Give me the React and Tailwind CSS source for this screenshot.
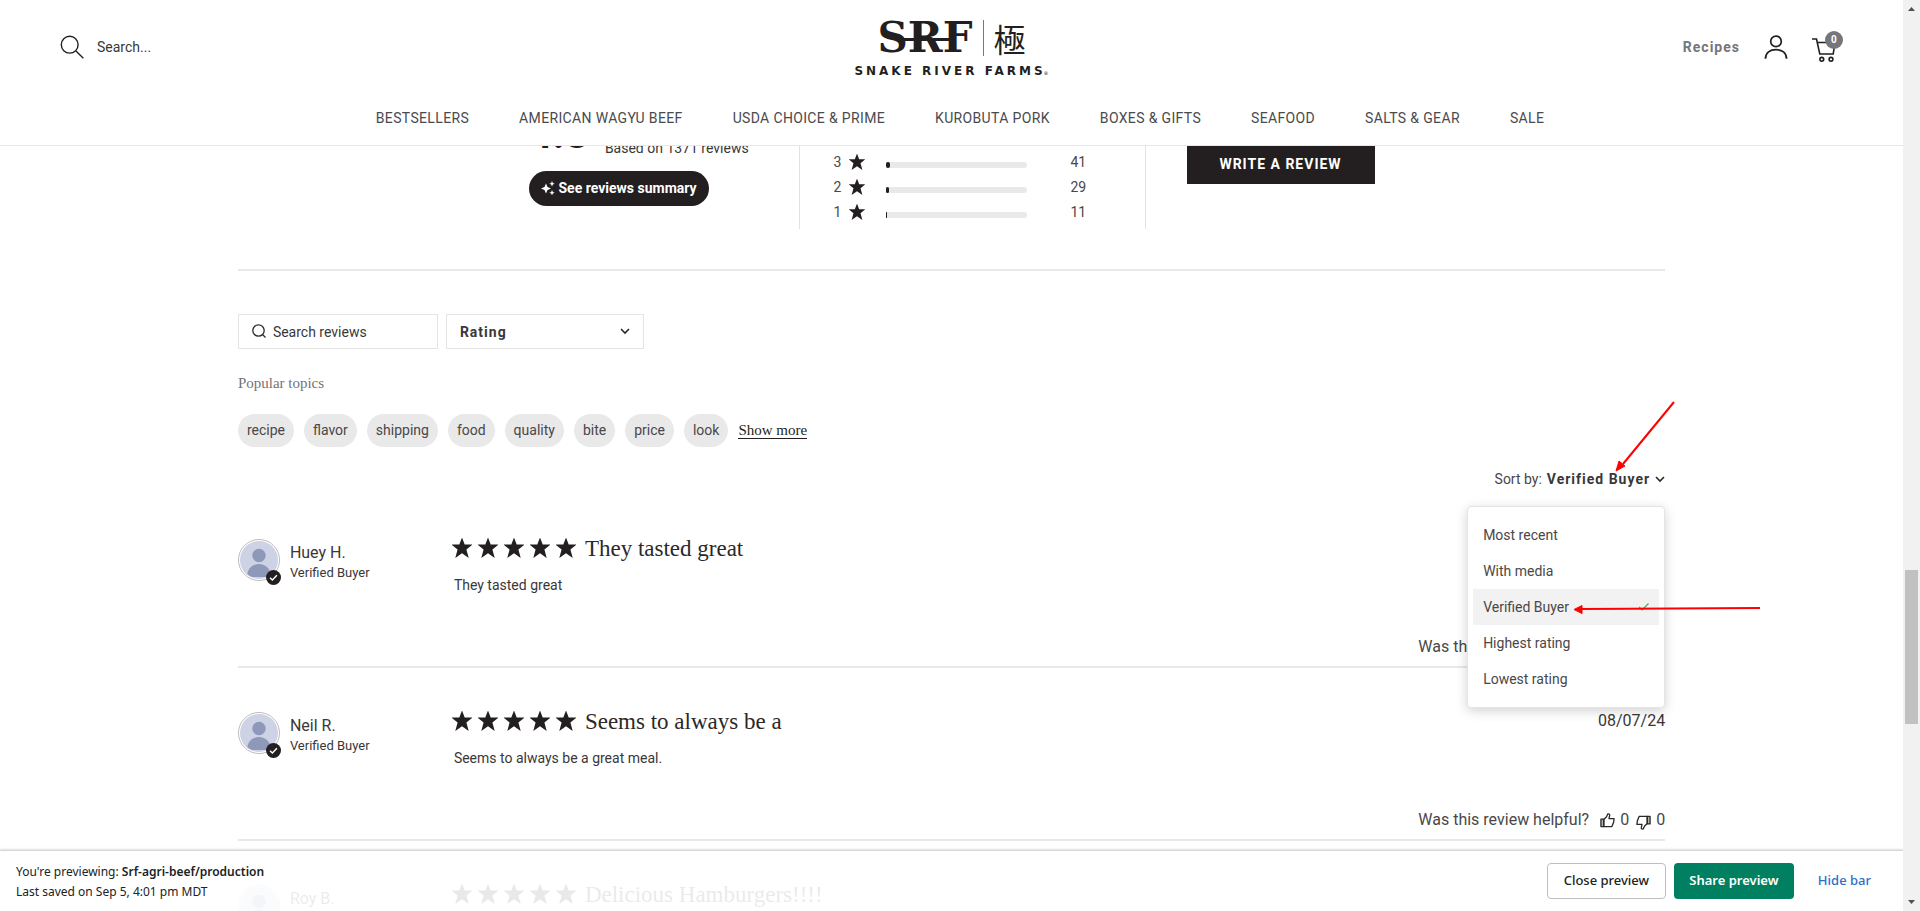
import React from "react";

const NAV = ["BESTSELLERS", "AMERICAN WAGYU BEEF", "USDA CHOICE & PRIME", "KUROBUTA PORK", "BOXES & GIFTS", "SEAFOOD", "SALTS & GEAR", "SALE"];
const BREAKDOWN = [
  { stars: 3, count: 41, fill: 4 },
  { stars: 2, count: 29, fill: 3 },
  { stars: 1, count: 11, fill: 1 },
];
const TOPICS = ["recipe", "flavor", "shipping", "food", "quality", "bite", "price", "look"];
const SORTS = ["Most recent", "With media", "Verified Buyer", "Highest rating", "Lowest rating"];
const REVIEWS = [
  { name: "Huey H.", title: "They tasted great", body: "They tasted great" },
  { name: "Neil R.", title: "Seems to always be a", body: "Seems to always be a great meal.", date: "08/07/24" },
  { name: "Roy B.", title: "Delicious Hamburgers!!!!" },
];

function Star({ className }) {
  return (
    <svg viewBox="0 0 20 20" className={className} fill="#231f20" aria-hidden="true">
      <path d="M10 -.5 12.700 6.500H20.500l-6.100 5 2.300 8.500L10 15.200 3.300 20l2.300-8.500-6.100-5h7.800z" />
    </svg>
  );
}

function Chevron() {
  return (
    <svg viewBox="0 0 10 7" className="h-[7px] w-[10px]" fill="none" stroke="#2b2829" strokeWidth="1.6" aria-hidden="true">
      <path d="M1 1l4 4 4-4" />
    </svg>
  );
}

function Thumb({ down }) {
  return (
    <svg viewBox="0 0 16 16" className={down ? "mt-1 h-[15px] w-[15px] rotate-180" : "h-[15px] w-[15px]"} fill="none" stroke="#2b2829" strokeWidth="1.400" strokeLinejoin="round" aria-hidden="true">
      <path d="M1 6.500h3v8H1z" fill="#b5b3b4" />
      <path d="M4 7l2.800-2.800L8.300 1c1.500-.4 2.200.5 2 1.600L9.600 6h5.400l-.4 3.500-1.900 5H4z" />
    </svg>
  );
}

function Avatar() {
  return (
    <div className="relative h-[42px] w-[42px] shrink-0">
      <svg viewBox="0 0 42 42" className="h-full w-full" aria-hidden="true">
        <defs>
          <clipPath id="face"><circle cx="21" cy="21" r="18.500" /></clipPath>
        </defs>
        <circle cx="21" cy="21" r="20.500" fill="#fff" stroke="#bdbdbd" />
        <circle cx="21" cy="21" r="19" fill="#cdd2e4" />
        <g fill="#8e99b9" clipPath="url(#face)">
          <circle cx="21" cy="16.500" r="6.700" />
          <path d="M9 38c0-8 5.500-13 12-13s12 5 12 13z" />
        </g>
      </svg>
      <svg viewBox="0 0 15 15" className="absolute -right-px -bottom-1 h-[15px] w-[15px]" aria-hidden="true">
        <circle cx="7.500" cy="7.500" r="7.500" fill="#231f20" />
        <path d="M4 7.700l2.400 2.300 4.500-4.700" fill="none" stroke="#fff" strokeWidth="1.500" />
      </svg>
    </div>
  );
}

function Header() {
  return (
    <header className="relative z-20 shrink-0 border-b border-[#e7e7e7] bg-white">
      <div className="grid h-[94px] grid-cols-3 px-[60px]">
        <label className="flex h-[94px] items-center gap-[13px]">
          <svg viewBox="0 0 24 24" className="h-6 w-6" fill="none" stroke="#231f20" strokeWidth="1.400" aria-hidden="true">
            <circle cx="9.700" cy="9.700" r="8.400" />
            <path d="M16 16l7.300 7.300" />
          </svg>
          <input type="text" aria-label="Search" placeholder="Search..." className="w-40 text-sm outline-none placeholder:text-[#3a3738]" />
        </label>
        <a href="#home" aria-label="Snake River Farms" className="flex flex-col items-center pt-4 text-[#231f20]">
          <div className="flex h-11 items-center gap-[10px]">
            <div className="relative font-['DejaVu_Serif',serif] text-[42px] leading-[44px] font-bold">
              SRF
              <span className="absolute top-[22px] right-5 left-6 h-[3px] bg-[#231f20]" />
            </div>
            <span className="h-9 w-px bg-[#7a7778]" />
            <span className="font-['Noto_Sans_CJK_JP',sans-serif] text-[32px] leading-[44px]">極</span>
          </div>
          <div className="mt-[3px] flex items-end font-['DejaVu_Sans',sans-serif] text-xs leading-4 font-bold tracking-[3px] whitespace-nowrap">
            SNAKE RIVER FARMS
            <span className="-ml-[2px] text-[5px] leading-3 font-normal tracking-normal">®</span>
          </div>
        </a>
        <div className="flex items-center justify-end">
          <a href="#recipes" className="text-sm font-bold tracking-[1px] text-[#75767a]">Recipes</a>
          <a href="#account" aria-label="Account" className="ml-6">
            <svg viewBox="0 0 24 24" className="h-6 w-6" fill="none" stroke="#231f20" strokeWidth="1.700" aria-hidden="true">
              <circle cx="12" cy="6.400" r="5.300" />
              <path d="M1.500 23.800C1.500 17.500 6 14.700 12 14.700s10.500 2.800 10.500 9.100" />
            </svg>
          </a>
          <a href="#cart" aria-label="Cart" className="relative ml-6 h-6 w-[31px]">
            <svg viewBox="0 0 26 26" className="mt-[2px] h-[26px] w-[26px]" fill="none" stroke="#231f20" strokeWidth="1.600" aria-hidden="true">
              <path d="M0 2h4.500l3.300 15h13.400L23 5.500H5.400" />
              <circle cx="9.800" cy="22.300" r="1.900" />
              <circle cx="19" cy="22.300" r="1.900" />
            </svg>
            <span className="absolute -top-1 right-0 flex h-[18px] w-[18px] items-center justify-center rounded-full bg-[#75767a] text-[10px] leading-none font-bold text-white">0</span>
          </a>
        </div>
      </div>
      <nav className="flex h-[51px] items-center justify-center gap-[50px] pb-1 pl-[17px] text-sm tracking-wide text-[#4a4a4d]">
        {NAV.map((item) => (
          <a key={item} href="#shop" className="whitespace-nowrap">{item}</a>
        ))}
      </nav>
    </header>
  );
}

function Summary() {
  return (
    <section className="-mt-6 flex justify-center pl-[42px] text-sm">
      <div className="w-[270px]">
        <div className="flex h-8 items-end gap-4 text-[#3a3738]">
          <span className="pb-1 text-[42px] leading-8 font-bold text-[#231f20]">4.8</span>
          <span className="leading-3">Based on 1371 reviews</span>
        </div>
        <button type="button" className="mt-[17px] flex h-[35px] items-center gap-1 rounded-full bg-[#231f20] px-3 pb-[2px] font-bold whitespace-nowrap text-white">
          <svg viewBox="0 0 14 14" className="h-[14px] w-[14px]" fill="#fff" aria-hidden="true">
            <path d="M5 2.500l1.500 3.500L10 7.500 6.500 9 5 12.500 3.500 9 0 7.500 3.500 6zM11 0l.8 1.900 1.900.8-1.900.8L11 5.400l-.8-1.900-1.900-.8 1.900-.8zM11 9l.8 1.900 1.900.8-1.900.8-.8 1.900-.8-1.900-1.900-.8 1.900-.8z" />
          </svg>
          See reviews summary
        </button>
      </div>
      <div className="w-[347px] border-x border-[#e2e2e2] pt-[27px] pb-[5px] pl-[34px]">
        {BREAKDOWN.map((row) => (
          <div key={row.stars} className="flex h-[25px] items-center text-[#4a4748]">
            <span className="w-[15px]">{row.stars}</span>
            <Star className="h-4 w-4" />
            <span className="mt-[6px] ml-[21px] flex h-[6px] w-[141px] overflow-hidden rounded-r-full bg-[#e9e9e9]">
              <span className="rounded-full bg-[#231f20]" style={{ width: row.fill }} />
            </span>
            <span className="ml-11">{row.count}</span>
          </div>
        ))}
      </div>
      <div className="w-[271px] pt-[22px] pl-[41px]">
        <button type="button" className="h-10 w-[188px] bg-[#231f20] font-bold tracking-[1px] text-white">WRITE A REVIEW</button>
      </div>
    </section>
  );
}

function SortMenu() {
  return (
    <div className="relative z-10 mt-5 flex justify-end">
      <button type="button" aria-haspopup="listbox" aria-expanded="true" className="flex h-6 items-center gap-[5px] text-sm text-[#4a4748]">
        <span>Sort by:</span>
        <span className="font-bold tracking-[1px] text-[#3a3738]">Verified Buyer</span>
        <Chevron />
      </button>
      <ul role="listbox" aria-label="Sort by" className="absolute top-[39px] right-0 w-[198px] rounded border border-[#e4e4e4] bg-white px-[5px] py-[10px] text-sm text-[#4a4748] shadow-[0_3px_12px_rgba(0,0,0,0.18)]">
        {SORTS.map((s) => (
          <li key={s} role="option" aria-selected={s === "Verified Buyer"} className={s === "Verified Buyer" ? "flex h-9 items-center justify-between bg-[#f2f2f2] px-[10px]" : "flex h-9 items-center px-[10px]"}>
            {s}
            {s === "Verified Buyer" && (
              <svg viewBox="0 0 10 8" className="h-2 w-[10px]" fill="none" stroke="#3fae5a" strokeWidth="1.200" aria-hidden="true">
                <path d="M0 4l3 3 6.500-6.500" />
              </svg>
            )}
          </li>
        ))}
      </ul>
      <svg viewBox="0 0 190 220" className="pointer-events-none absolute -top-[67px] -right-[95px] h-[220px] w-[190px]" stroke="#fe0000" fill="#fe0000" aria-hidden="true">
        <path d="M104 2L53 64" strokeWidth="2" />
        <path d="M46 71l3-10 6 5z" strokeWidth="1" />
        <path d="M190 208L12 209" strokeWidth="2" />
        <path d="M4 209.500l8-4v8z" strokeWidth="1" />
      </svg>
    </div>
  );
}

function Review({ r }) {
  return (
    <article className="flex h-[173px] border-b-2 border-[#e8e8e8] text-[#3a3738]">
      <div className="flex w-[214px] gap-[10px] pt-11">
        <Avatar />
        <div className="pt-1">
          <div className="text-base leading-5">{r.name}</div>
          <div className="text-[13px] leading-5">Verified Buyer</div>
        </div>
      </div>
      <div className="flex-1 pt-10">
        <div className="flex items-center gap-[6px]">
          <div className="flex gap-[6px] pb-[3px]">
            {[1, 2, 3, 4, 5].map((n) => <Star key={n} className="h-5 w-5" />)}
          </div>
          <h3 className="pl-[3px] font-['Liberation_Serif',serif] text-[23px] leading-7 text-[#2b2829]">{r.title}</h3>
        </div>
        {r.body && <p className="mt-3 pl-[2px] text-sm leading-5">{r.body}</p>}
      </div>
      <div className="flex flex-col items-end pt-[41px] pb-[7px] leading-6">
        {r.date && <time>{r.date}</time>}
        {r.body && (
          <div className="mt-auto flex items-center gap-[7px] text-[#4a4748]">
            <span className="mr-1">Was this review helpful?</span>
            <button type="button" aria-label="Helpful" className="flex items-center gap-[5px]"><Thumb />0</button>
            <button type="button" aria-label="Not helpful" className="flex items-center gap-[5px]"><Thumb down />0</button>
          </div>
        )}
      </div>
    </article>
  );
}

function PreviewBar() {
  return (
    <footer className="absolute inset-x-0 bottom-0 z-20 flex h-[61px] items-center border-t border-[#d6d6d6] bg-white/90 pr-8 pl-4 font-['Noto_Sans',sans-serif] text-xs text-[#202223] shadow-[0_-1px_2px_rgba(0,0,0,0.12)]">
      <div className="flex-1 pt-px leading-5">
        <p>You're previewing: <span className="font-semibold">Srf-agri-beef/production</span></p>
        <p>Last saved on Sep 5, 4:01 pm MDT</p>
      </div>
      <div className="flex gap-2 text-[13px] font-medium">
        <button type="button" className="h-9 w-[119px] rounded border border-[#babfc3] bg-white">Close preview</button>
        <button type="button" className="h-9 w-[120px] rounded bg-[#008060] font-semibold text-white">Share preview</button>
        <button type="button" className="ml-4 h-9 text-[#2c6ecb]">Hide bar</button>
      </div>
    </footer>
  );
}

function Scrollbar() {
  return (
    <div className="flex w-[17px] shrink-0 flex-col items-center bg-[#f1f1f1] py-[7px]" aria-hidden="true">
      <svg viewBox="0 0 7 4" className="h-1 w-[7px]" fill="#505050"><path d="M0 4L3.500 0 7 4z" /></svg>
      <span className="flex-[559]" />
      <span className="w-[13px] flex-[154] bg-[#c1c1c1]" />
      <span className="flex-[176]" />
      <svg viewBox="0 0 7 4" className="h-1 w-[7px]" fill="#505050"><path d="M0 0h7L3.500 4z" /></svg>
    </div>
  );
}

export default function App() {
  return (
    <div className="flex h-screen overflow-hidden bg-white font-['Roboto',sans-serif] text-[#231f20]">
      <div className="relative flex min-w-0 flex-1 flex-col overflow-hidden">
        <Header />
        <main className="min-h-0 flex-1">
          <div className="mx-auto w-3/4">
            <Summary />
            <div className="mt-10 border-b-2 border-[#e8e8e8]" />
            <div className="mt-[43px] flex gap-2">
              <label className="flex h-[35px] w-[200px] items-center gap-[7px] border border-[#e4e4e4] pl-[13px]">
                <svg viewBox="0 0 14 14" className="mb-[2px] h-[14px] w-[14px]" fill="none" stroke="#2b2829" strokeWidth="1.300" aria-hidden="true">
                  <circle cx="6.500" cy="6.500" r="5.700" />
                  <path d="M10.500 10.500l3 3" />
                </svg>
                <input type="text" aria-label="Search reviews" placeholder="Search reviews" className="w-40 min-w-0 text-sm outline-none placeholder:text-[#3a3738]" />
              </label>
              <div className="grid h-[35px] w-[198px] items-center border border-[#e4e4e4]">
                <select aria-label="Rating" className="col-start-1 row-start-1 h-full w-full appearance-none bg-transparent pl-[13px] text-sm font-bold tracking-[1px] text-[#3a3738]">
                  <option>Rating</option>
                </select>
                <span className="pointer-events-none col-start-1 row-start-1 mr-[13px] justify-self-end"><Chevron /></span>
              </div>
            </div>
            <h2 className="mt-6 font-['Liberation_Serif',serif] text-[15px] leading-5 text-[#757374]">Popular topics</h2>
            <div className="mt-[21px] flex items-center gap-[10px]">
              {TOPICS.map((t) => (
                <button key={t} type="button" className="h-[33px] rounded-full bg-[#e9e9e9] px-[9px] pb-[2px] text-sm text-[#4a4748]">{t}</button>
              ))}
              <button type="button" className="border-b border-[#231f20] font-['Liberation_Serif',serif] text-[15px] leading-4">Show more</button>
            </div>
            <SortMenu />
            <div className="mt-1">
              {REVIEWS.map((r) => <Review key={r.name} r={r} />)}
            </div>
          </div>
        </main>
        <PreviewBar />
      </div>
      <Scrollbar />
    </div>
  );
}
